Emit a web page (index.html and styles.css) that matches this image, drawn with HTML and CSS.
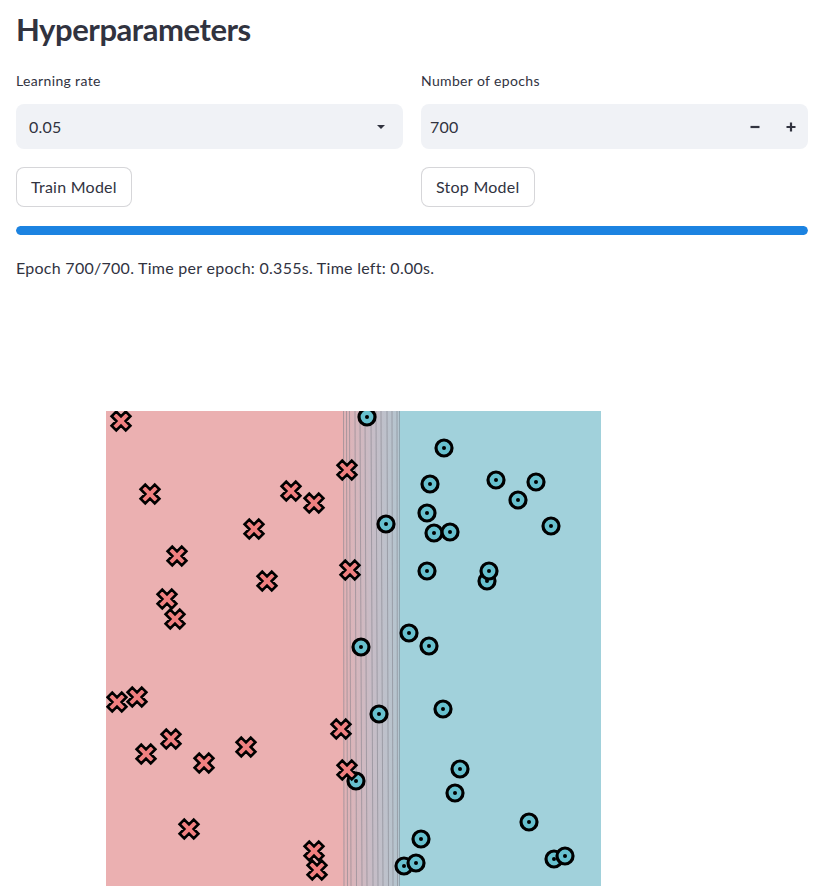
FILE: index.html
```html
<!DOCTYPE html>
<html lang="en">
<head>
<meta charset="utf-8">
<title>Hyperparameters</title>
<link rel="stylesheet" href="styles.css">
</head>
<body>
<div class="page">
  <h2 class="title">Hyperparameters</h2>
  <div class="cols">
    <div class="col">
      <div class="lbl">Learning rate</div>
      <div class="field">
        <span class="value">0.05</span>
        <svg class="caret" width="10" height="6" viewBox="0 0 10 6"><path d="M1 1h8L5 5z" fill="#31333f"/></svg>
      </div>
      <div class="btnrow"><button class="btn">Train Model</button></div>
    </div>
    <div class="col">
      <div class="lbl">Number of epochs</div>
      <div class="field">
        <span class="value">700</span>
        <div class="steps">
          <svg class="step" width="12" height="12" viewBox="0 0 12 12"><path d="M1.5 6h9" stroke="#31333f" stroke-width="2.2"/></svg>
          <svg class="step" width="12" height="12" viewBox="0 0 12 12"><path d="M1.5 6h9M6 1.5v9" stroke="#31333f" stroke-width="2.2"/></svg>
        </div>
      </div>
      <div class="btnrow"><button class="btn">Stop Model</button></div>
    </div>
  </div>
  <div class="progress"><div class="bar" style="width:100%"></div></div>
  <p class="status">Epoch 700/700. Time per epoch: 0.355s. Time left: 0.00s.</p>
  <svg class="plot" width="792" height="600" viewBox="16 296 792 600">
    <defs>
      <clipPath id="ax"><rect x="106" y="411" width="495" height="500"/></clipPath>
      <linearGradient id="mid" x1="0" x2="1" y1="0" y2="0">
        <stop offset="0" stop-color="#e3b1b4"/>
        <stop offset="0.5" stop-color="#c7bcc6"/>
        <stop offset="1" stop-color="#b3c6d0"/>
      </linearGradient>
      <g id="xm"><path transform="rotate(45)" d="M-3.3 -10H3.3V-3.3H10V3.3H3.3V10H-3.3V3.3H-10V-3.3H-3.3Z" fill="#f08080" stroke="#000" stroke-width="2.6" stroke-linejoin="miter"/></g>
      <g id="om"><circle r="8" fill="#67c0ce" stroke="#000" stroke-width="3.2"/><circle r="2" fill="#000"/></g>
    </defs>
    <g clip-path="url(#ax)">
      <rect x="106" y="411" width="238" height="500" fill="#ebb0b1"/>
      <rect x="343" y="411" width="57" height="500" fill="url(#mid)"/>
      <rect x="399" y="411" width="202" height="500" fill="#a1d1db"/>
      <g stroke="#7f7f88" stroke-opacity="0.55" stroke-width="1" fill="none">
        <path d="M343.5 411L344 886"/>
        <path d="M346.5 411L347.5 886"/>
        <path d="M349.5 411L351 886"/>
        <path d="M355 411L356.5 886"/>
        <path d="M360 411L362 886"/>
        <path d="M365 411L367 886"/>
        <path d="M371 411L373 886"/>
        <path d="M376 411L378 886"/>
        <path d="M381 411L383 886"/>
        <path d="M387 411L388.5 886"/>
        <path d="M392 411L393 886"/>
        <path d="M397 411L397.5 886"/>
        <path d="M399.5 411L399.5 886"/>
      </g>
      <use href="#om" x="367" y="417"/>
      <use href="#om" x="444" y="448"/>
      <use href="#om" x="430" y="484"/>
      <use href="#om" x="496" y="480"/>
      <use href="#om" x="536" y="482"/>
      <use href="#om" x="518" y="500"/>
      <use href="#om" x="427" y="513"/>
      <use href="#om" x="386" y="524"/>
      <use href="#om" x="434" y="533"/>
      <use href="#om" x="450" y="532"/>
      <use href="#om" x="551" y="526"/>
      <use href="#om" x="427" y="571"/>
      <use href="#om" x="487" y="581"/>
      <use href="#om" x="489" y="571"/>
      <use href="#om" x="409" y="633"/>
      <use href="#om" x="429" y="646"/>
      <use href="#om" x="361" y="647"/>
      <use href="#om" x="379" y="714"/>
      <use href="#om" x="443" y="709"/>
      <use href="#om" x="356" y="781"/>
      <use href="#om" x="460" y="769"/>
      <use href="#om" x="455" y="793"/>
      <use href="#om" x="529" y="822"/>
      <use href="#om" x="421" y="839"/>
      <use href="#om" x="404" y="866"/>
      <use href="#om" x="416" y="863"/>
      <use href="#om" x="554" y="859"/>
      <use href="#om" x="565" y="856"/>
      <use href="#xm" x="121" y="421"/>
      <use href="#xm" x="150" y="494"/>
      <use href="#xm" x="347" y="470"/>
      <use href="#xm" x="291" y="491"/>
      <use href="#xm" x="314" y="503"/>
      <use href="#xm" x="254" y="529"/>
      <use href="#xm" x="177" y="556"/>
      <use href="#xm" x="350" y="570"/>
      <use href="#xm" x="267" y="581"/>
      <use href="#xm" x="167" y="599"/>
      <use href="#xm" x="175" y="619"/>
      <use href="#xm" x="117" y="702"/>
      <use href="#xm" x="137" y="697"/>
      <use href="#xm" x="171" y="739"/>
      <use href="#xm" x="146" y="754"/>
      <use href="#xm" x="204" y="763"/>
      <use href="#xm" x="246" y="747"/>
      <use href="#xm" x="341" y="729"/>
      <use href="#xm" x="347" y="770"/>
      <use href="#xm" x="189" y="829"/>
      <use href="#xm" x="314" y="851"/>
      <use href="#xm" x="317" y="870"/>
    </g>
  </svg>
</div>
</body>
</html>
```

FILE: styles.css
```css
html, body {
  margin: 0;
  padding: 0;
  background: #ffffff;
  overflow: hidden;
}
body {
  font-family: "Lato", "Source Sans Pro", sans-serif;
  color: #31333f;
}
.page {
  width: 792px;
  padding: 0 23px 0 16px;
}
.title {
  margin: 0;
  padding-top: 10px;
  font-size: 31px;
  line-height: 38px;
  font-weight: 700;
  letter-spacing: -0.45px;
}
.cols {
  display: grid;
  grid-template-columns: 387px 387px;
  column-gap: 18px;
  margin-top: 23px;
}
.col {
  display: flex;
  flex-direction: column;
}
.lbl {
  font-size: 14px;
  line-height: 20px;
  height: 20px;
  margin-bottom: 13px;
  letter-spacing: 0.35px;
}
.field {
  height: 45px;
  background: #f0f2f6;
  border-radius: 8px;
  display: flex;
  align-items: center;
  justify-content: space-between;
  padding: 0 16px 0 13px;
  box-sizing: border-box;
  font-size: 16px;
  letter-spacing: 0.25px;
}
.col:nth-child(2) .field {
  padding: 0 11px 0 9px;
}
.caret {
  display: block;
  margin-right: 1px;
}
.steps {
  display: flex;
  gap: 24px;
}
.step {
  display: block;
}
.btnrow {
  margin-top: 18px;
  display: flex;
}
.btn {
  font-family: inherit;
  font-size: 16px;
  letter-spacing: 0.25px;
  color: #31333f;
  background: #ffffff;
  border: 1px solid rgba(49, 51, 63, 0.2);
  border-radius: 8px;
  height: 40px;
  padding: 0 14px;
  line-height: 38px;
}
.progress {
  margin-top: 19px;
  height: 9px;
  background: #f0f2f6;
  border-radius: 5px;
  overflow: hidden;
}
.bar {
  height: 100%;
  background: #1c83e1;
  border-radius: 5px;
}
.status {
  margin: 21px 0 0;
  font-size: 16px;
  line-height: 24px;
  letter-spacing: 0.27px;
}
.plot {
  display: block;
  margin-top: 16px;
}
```
